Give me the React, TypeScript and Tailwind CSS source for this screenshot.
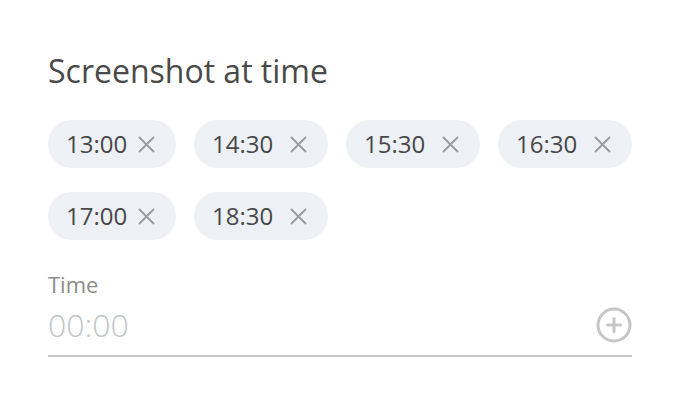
import React from "react";

const chips = [
  { t: "13:00", w: "w-[128px]" },
  { t: "14:30", w: "w-[134px]" },
  { t: "15:30", w: "w-[134px]" },
  { t: "16:30", w: "w-[134px]" },
  { t: "17:00", w: "w-[128px]" },
  { t: "18:30", w: "w-[134px]" },
];

function XIcon() {
  return (
    <svg width="17" height="17" viewBox="0 0 17 17" fill="none">
      <path d="M1.5 1.5 L15.5 15.5 M15.5 1.5 L1.5 15.5" stroke="#9b9b9b" strokeWidth="1.8" strokeLinecap="round" />
    </svg>
  );
}

function PlusCircle() {
  return (
    <svg width="36" height="36" viewBox="0 0 36 36" fill="none">
      <circle cx="18" cy="18" r="16" stroke="#c6c6c6" strokeWidth="3" />
      <path d="M18 11.5 V24.5 M11.5 18 H24.5" stroke="#c6c6c6" strokeWidth="3" strokeLinecap="round" />
    </svg>
  );
}

export default function App() {
  return (
    <div
      className="w-[680px] h-[404px] bg-white px-[48px] pt-[51px]"
      style={{ fontFamily: '"Open Sans", "Noto Sans", sans-serif' }}
    >
      <h1 className="text-[32px] leading-[40px] text-[#4a4a4a] font-normal">Screenshot at time</h1>
      <div className="mt-[29px] flex flex-wrap gap-x-[18px] gap-y-[24px] w-[584px]">
        {chips.map((c) => (
          <div
            key={c.t}
            className={`${c.w} h-[48px] rounded-full bg-[#edf1f5] flex items-center justify-between pl-[18px] pr-[21px] text-[24px] leading-[48px] text-[#474747]`}
          >
            <span>{c.t}</span>
            <XIcon />
          </div>
        ))}
      </div>
      <div className="mt-[30px]">
        <div className="text-[22px] leading-[28px] text-[#8c8c8c]">Time</div>
        <div className="mt-[7px] flex items-center border-b-2 border-[#c8c8c8] pb-[10px]">
          <input
            className="flex-1 h-[40px] text-[32px] leading-[40px] font-light text-[#3d3d3d] placeholder:text-[#c2c5c9] outline-none bg-transparent"
            placeholder="00:00"
            style={{ fontFamily: '"Open Sans", "Noto Sans", sans-serif' }}
          />
          <PlusCircle />
        </div>
      </div>
    </div>
  );
}
